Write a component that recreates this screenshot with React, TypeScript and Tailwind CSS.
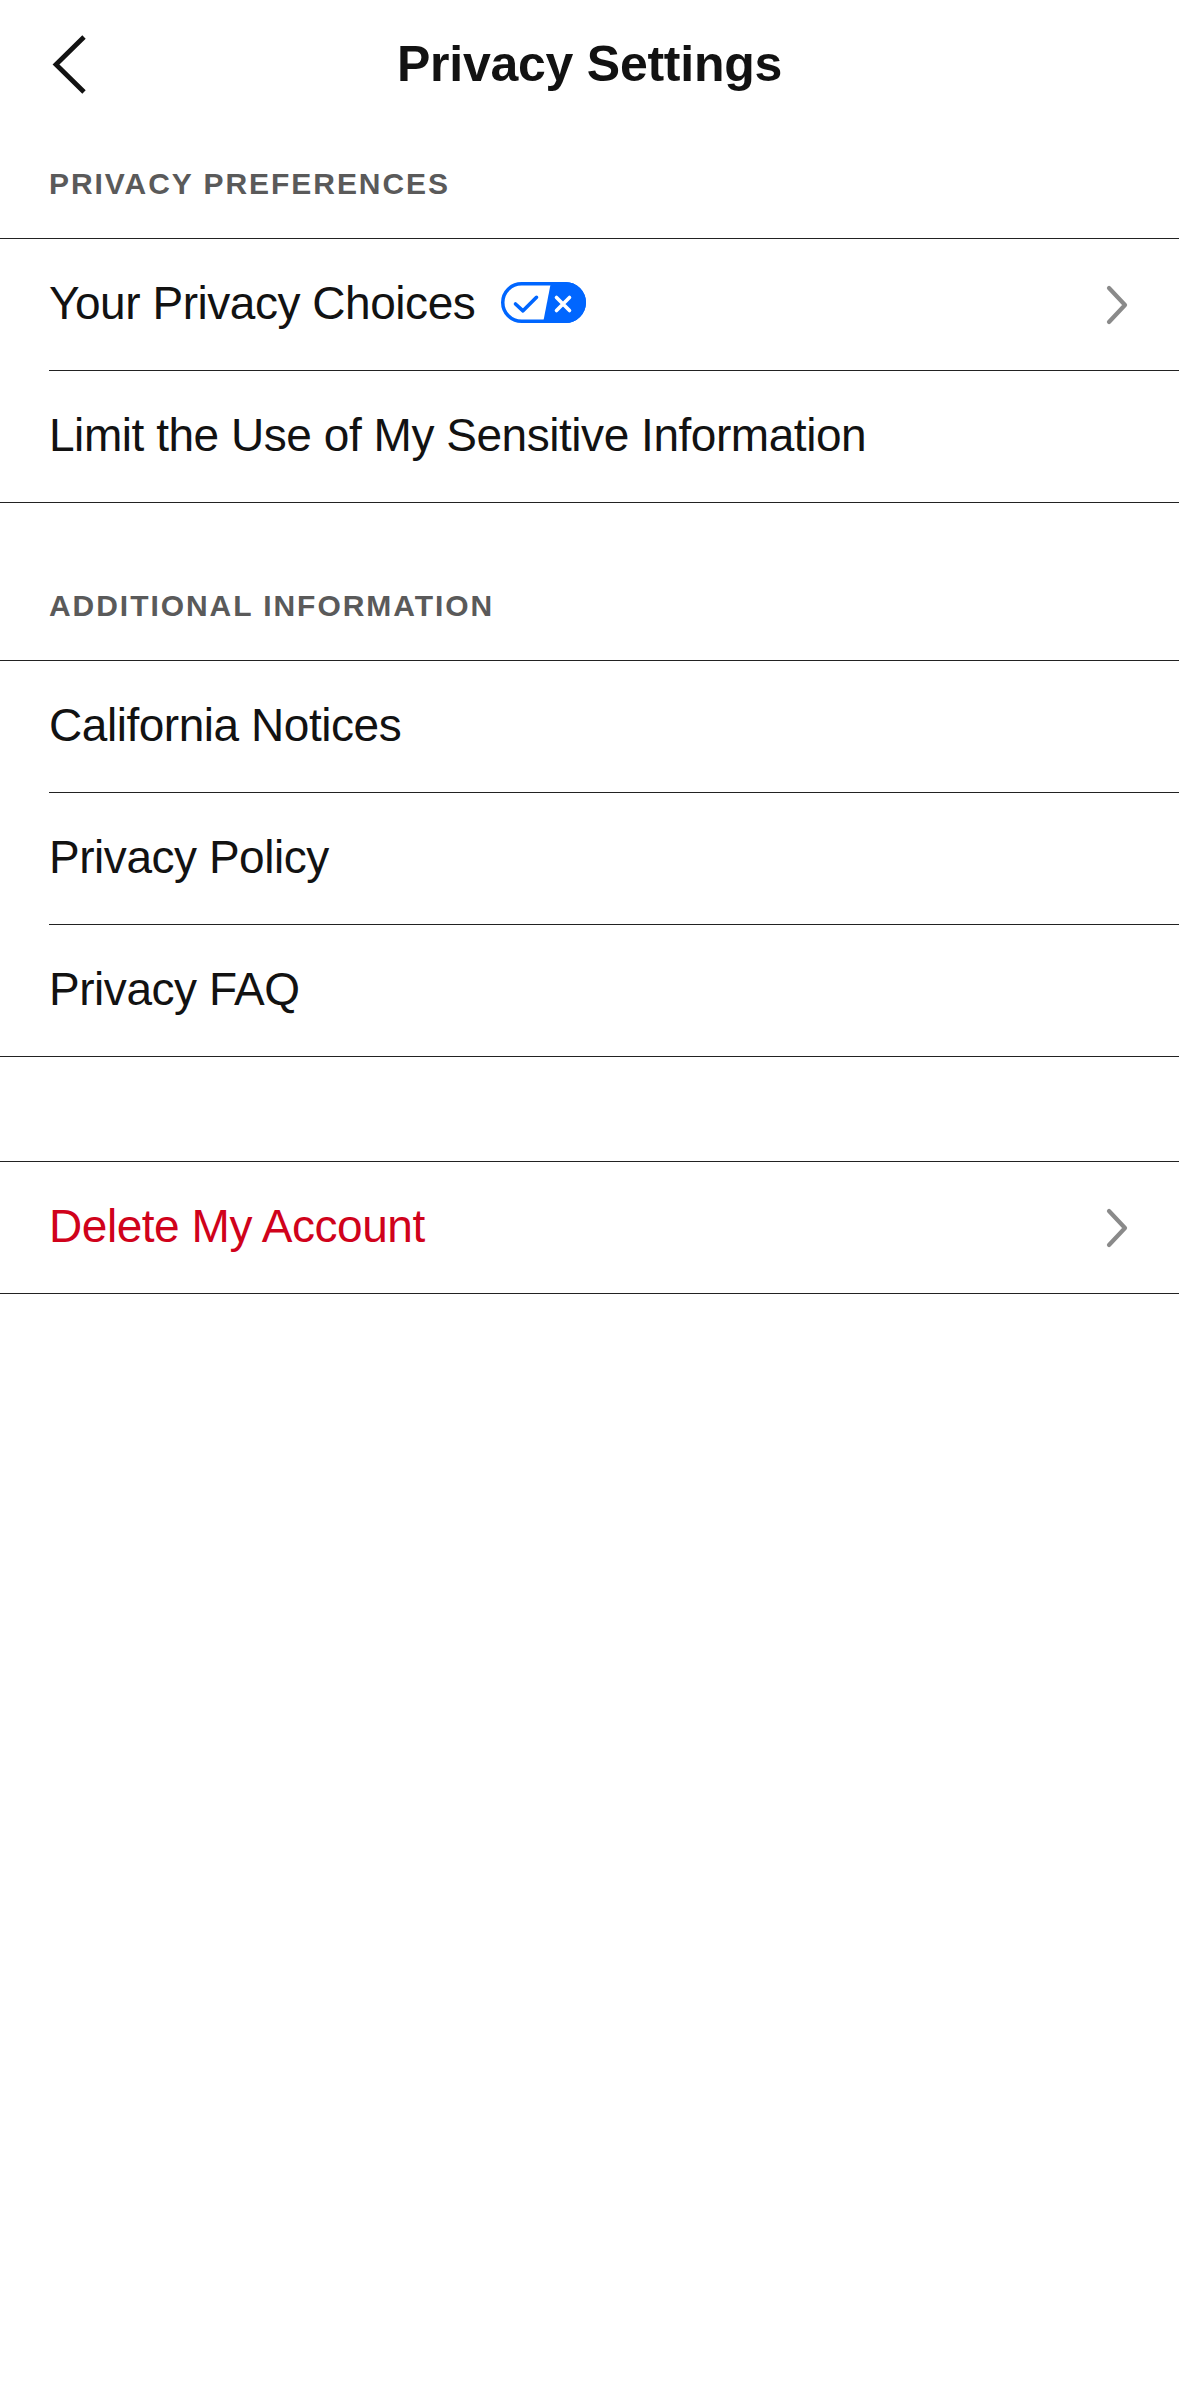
import React from "react";

const FONT = { fontFamily: '"Liberation Sans", Arial, sans-serif' };

function BackChevron() {
  return (
    <svg width="40" height="60" viewBox="0 0 40 60" fill="none">
      <path d="M36 3 L8 30.5 L36 58" stroke="#121212" strokeWidth="4.8" strokeLinejoin="miter" />
    </svg>
  );
}

function RightChevron() {
  return (
    <svg width="26" height="40" viewBox="0 0 26 40" fill="none">
      <path d="M4 3 L20 20 L4 37" stroke="#8a8a8a" strokeWidth="4.2" strokeLinecap="round" strokeLinejoin="round" />
    </svg>
  );
}

function PrivacyToggle() {
  return (
    <svg width="85" height="41" viewBox="0 0 85 41" fill="none">
      <rect x="1.75" y="1.75" width="81.5" height="37.5" rx="18.75" fill="#ffffff" stroke="#0066ff" strokeWidth="3.5" />
      <path d="M50 0 H64.5 A20.5 20.5 0 0 1 64.5 41 H42 Z" fill="#0066ff" />
      <path d="M14.5 22 L22 28.8 L35.5 15.3" stroke="#0066ff" strokeWidth="3.6" strokeLinecap="round" strokeLinejoin="round" />
      <path d="M55.5 15.5 L68.5 28.5 M68.5 15.5 L55.5 28.5" stroke="#ffffff" strokeWidth="3.6" strokeLinecap="round" />
    </svg>
  );
}

function SectionHeader({ label, extraTop }: { label: string; extraTop?: boolean }) {
  return (
    <div
      className={
        extraTop
          ? "mt-[47px] flex h-[110px] items-center pl-[49px]"
          : "flex h-[110px] items-center pl-[49px]"
      }
    >
      <span className="text-[30px] font-bold uppercase tracking-[0.065em] text-[#5a5a5a]">{label}</span>
    </div>
  );
}

function Row({
  label,
  inset,
  chevron,
  badge,
  red,
}: {
  label: string;
  inset?: boolean;
  chevron?: boolean;
  badge?: boolean;
  red?: boolean;
}) {
  const inner = (
    <div className="flex h-full items-center justify-between pr-[48px]">
      <div className="flex items-center gap-[26px] pb-[4px]">
        <span
          className={
            red
              ? "text-[46px] leading-none tracking-[-0.01em] text-[#d0021b]"
              : "text-[46px] leading-none tracking-[-0.01em] text-[#121212]"
          }
        >
          {label}
        </span>
        {badge ? <PrivacyToggle /> : null}
      </div>
      {chevron ? <RightChevron /> : null}
    </div>
  );
  if (inset) {
    return (
      <div className="h-[132px] pl-[49px]">
        <div className="h-full border-b border-[#222222]">{inner}</div>
      </div>
    );
  }
  return (
    <div className="h-[132px] border-b border-[#222222] pl-[49px]">{inner}</div>
  );
}

export default function App() {
  return (
    <div className="min-h-[2396px] w-full bg-white" style={FONT}>
      <div className="grid h-[128px] grid-cols-[1fr_auto_1fr] items-center">
        <div className="flex items-center pl-[48px]">
          <BackChevron />
        </div>
        <h1 className="text-[50px] font-bold leading-none tracking-[-0.005em] text-[#121212]">
          Privacy Settings
        </h1>
        <div />
      </div>

      <SectionHeader label="Privacy Preferences" />
      <div className="border-t border-[#222222]">
        <Row label="Your Privacy Choices" inset chevron badge />
        <Row label="Limit the Use of My Sensitive Information" />
      </div>

      <SectionHeader label="Additional Information" extraTop />
      <div className="border-t border-[#222222]">
        <Row label="California Notices" inset />
        <Row label="Privacy Policy" inset />
        <Row label="Privacy FAQ" />
      </div>

      <div className="h-[104px]" />
      <div className="border-t border-[#222222]">
        <Row label="Delete My Account" chevron red />
      </div>
    </div>
  );
}
